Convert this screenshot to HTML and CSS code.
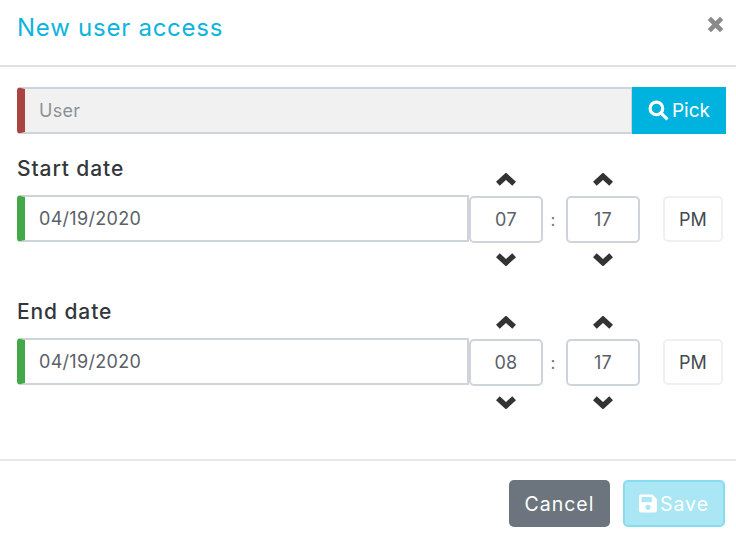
FILE: index.html
```html
<!DOCTYPE html>
<html lang="en">
<head>
    <meta name="viewport" content="width=device-width, initial-scale=1">
    <title>New user access</title>
    <link rel="stylesheet" href="styles.css">
</head>
<body>
<div class="modal">
    <div class="modal-header">
        <h4 class="modal-title">New user access</h4>
        <svg class="close-icon" viewBox="0 0 14 14"><path d="M2.500 2.500l9 9M11.500 2.500l-9 9"/></svg>
    </div>

    <div class="modal-body">
        <div class="user-row">
            <input class="field field-user" type="text" placeholder="User">
            <button class="btn-pick">
                <svg class="search-icon" viewBox="0 0 20 20"><circle cx="8" cy="8" r="6"/><path d="M12.500 12.500l6 6"/></svg>Pick
            </button>
        </div>

        <div class="date-block">
            <div class="date-left">
                <label class="date-label">Start date</label>
                <input class="field field-date" type="text" value="04/19/2020">
            </div>
            <div class="time-picker">
                <div class="time-col">
                    <svg class="chevron" viewBox="0 0 20 12"><path d="M2.500 10l7.500-7 7.500 7"/></svg>
                    <input class="time-input" type="text" value="07">
                    <svg class="chevron" viewBox="0 0 20 12"><path d="M2.500 2l7.500 7 7.500-7"/></svg>
                </div>
                <span class="time-sep">:</span>
                <div class="time-col">
                    <svg class="chevron" viewBox="0 0 20 12"><path d="M2.500 10l7.500-7 7.500 7"/></svg>
                    <input class="time-input" type="text" value="17">
                    <svg class="chevron" viewBox="0 0 20 12"><path d="M2.500 2l7.500 7 7.500-7"/></svg>
                </div>
                <button class="btn-ampm">PM</button>
            </div>
        </div>

        <div class="date-block">
            <div class="date-left">
                <label class="date-label">End date</label>
                <input class="field field-date" type="text" value="04/19/2020">
            </div>
            <div class="time-picker">
                <div class="time-col">
                    <svg class="chevron" viewBox="0 0 20 12"><path d="M2.500 10l7.500-7 7.500 7"/></svg>
                    <input class="time-input" type="text" value="08">
                    <svg class="chevron" viewBox="0 0 20 12"><path d="M2.500 2l7.500 7 7.500-7"/></svg>
                </div>
                <span class="time-sep">:</span>
                <div class="time-col">
                    <svg class="chevron" viewBox="0 0 20 12"><path d="M2.500 10l7.500-7 7.500 7"/></svg>
                    <input class="time-input" type="text" value="17">
                    <svg class="chevron" viewBox="0 0 20 12"><path d="M2.500 2l7.500 7 7.500-7"/></svg>
                </div>
                <button class="btn-ampm">PM</button>
            </div>
        </div>
    </div>

    <div class="modal-footer">
        <button class="btn-cancel">Cancel</button>
        <button class="btn-save">
            <svg class="save-icon" viewBox="0 0 448 512"><path d="M433.941 129.941l-83.882-83.882A48 48 0 0 0 316.118 32H48C21.490 32 0 53.490 0 80v352c0 26.510 21.490 48 48 48h352c26.510 0 48-21.490 48-48V163.882a48 48 0 0 0-14.059-33.941zM224 416c-35.346 0-64-28.654-64-64 0-35.346 28.654-64 64-64s64 28.654 64 64c0 35.346-28.654 64-64 64zm96-304.520V212c0 6.627-5.373 12-12 12H76c-6.627 0-12-5.373-12-12V108c0-6.627 5.373-12 12-12h228.520c3.183 0 6.235 1.264 8.485 3.515l3.480 3.480A11.996 11.996 0 0 1 320 111.480z"/></svg>Save
        </button>
    </div>
</div>
</body>
</html>
```

FILE: styles.css
```css
body {
    font-family: Inter, "Open Sans", sans-serif;
    background-color: white;
    margin: 0;
    color: #343a40;
}

.modal {
    width: 736px;
    height: 541px;
    overflow: hidden;
}

.modal-header {
    display: flex;
    justify-content: space-between;
    height: 65px;
    padding: 0 11px 0 17px;
    border-bottom: 2px solid #dee2e6;
    box-sizing: content-box;
}

.modal-title {
    margin: 0;
    padding-top: 13px;
    font-size: 24px;
    letter-spacing: 0.75px;
    line-height: 30px;
    font-weight: 400;
    color: #0db4de;
}

.close-icon {
    width: 19px;
    height: 19px;
    margin: 15px 0 0 0;
    fill: none;
    stroke: #8a8a8a;
    stroke-width: 3.500;
}

.modal-body {
    height: 392px;
    padding: 20px 10px 0 17px;
    box-sizing: border-box;
}

.user-row {
    display: flex;
    height: 47px;
}

.field {
    font-family: inherit;
    font-size: 18px;
    letter-spacing: 0.300px;
    height: 47px;
    box-sizing: border-box;
    padding: 0 0 0 14px;
    outline: none;
    border: 1px solid #ced4da;
    border-width: 2px 1px 2px 8px;
    border-radius: 4px 0 0 4px;
}

.field-user {
    flex: 1;
    min-width: 0;
    background-color: #f1f1f1;
    border-left-color: #a94442;
}

.field-user::placeholder {
    color: #8b9197;
}

.btn-pick {
    width: 94px;
    border: none;
    background-color: #00b3de;
    color: white;
    font-family: inherit;
    font-size: 19px;
    display: flex;
    align-items: center;
    justify-content: center;
    gap: 3px;
    padding: 0;
}

.search-icon {
    width: 21px;
    height: 21px;
    fill: none;
    stroke: white;
    stroke-width: 3;
}

.date-block {
    display: flex;
    height: 143px;
}

.date-left {
    width: 452px;
}

.date-label {
    display: block;
    margin-top: 21px;
    height: 40px;
    line-height: 27px;
    font-size: 21px;
    letter-spacing: 0.900px;
    font-weight: 500;
    color: #33373b;
}

.field-date {
    width: 452px;
    background-color: white;
    border-left-color: #43a847;
    border-right-width: 2px;
    color: #5a6068;
}

.time-picker {
    display: flex;
    align-items: flex-start;
    padding-top: 39px;
}

.time-col {
    width: 74px;
    display: flex;
    flex-direction: column;
    align-items: center;
}

.chevron {
    width: 22px;
    height: 13px;
    fill: none;
    stroke: #333;
    stroke-width: 5;
}

.time-input {
    width: 74px;
    height: 47px;
    box-sizing: border-box;
    margin: 10px 0;
    text-align: center;
    font-family: inherit;
    font-size: 18px;
    letter-spacing: 0.300px;
    color: #5a6068;
    border: 2px solid #ced4da;
    border-radius: 5px;
    outline: none;
}

.time-sep {
    width: 20px;
    margin: 24px 3px 0 0;
    text-align: center;
    font-size: 17px;
    line-height: 47px;
    color: #777;
}

.btn-ampm {
    width: 60px;
    height: 46px;
    margin: 23px 0 0 23px;
    background-color: white;
    border: 2px solid #eef0f3;
    border-radius: 5px;
    font-family: inherit;
    font-size: 18px;
    color: #444a50;
    padding: 0;
}

.modal-footer {
    display: flex;
    justify-content: flex-end;
    gap: 13px;
    padding: 19px 11px 0 0;
    border-top: 2px solid #e4e6ea;
}

.btn-cancel, .btn-save {
    height: 47px;
    font-family: inherit;
    font-size: 19.500px;
    letter-spacing: 1px;
    border-radius: 5px;
    padding: 0;
}

.btn-cancel {
    width: 101px;
    border: none;
    background-color: #6c757d;
    color: white;
}

.btn-save {
    width: 102px;
    display: flex;
    align-items: center;
    justify-content: center;
    gap: 3px;
    background-color: #aae6f3;
    border: 2px solid #86dcf0;
    color: white;
}

.save-icon {
    width: 18px;
    height: 21px;
    fill: white;
}
```
